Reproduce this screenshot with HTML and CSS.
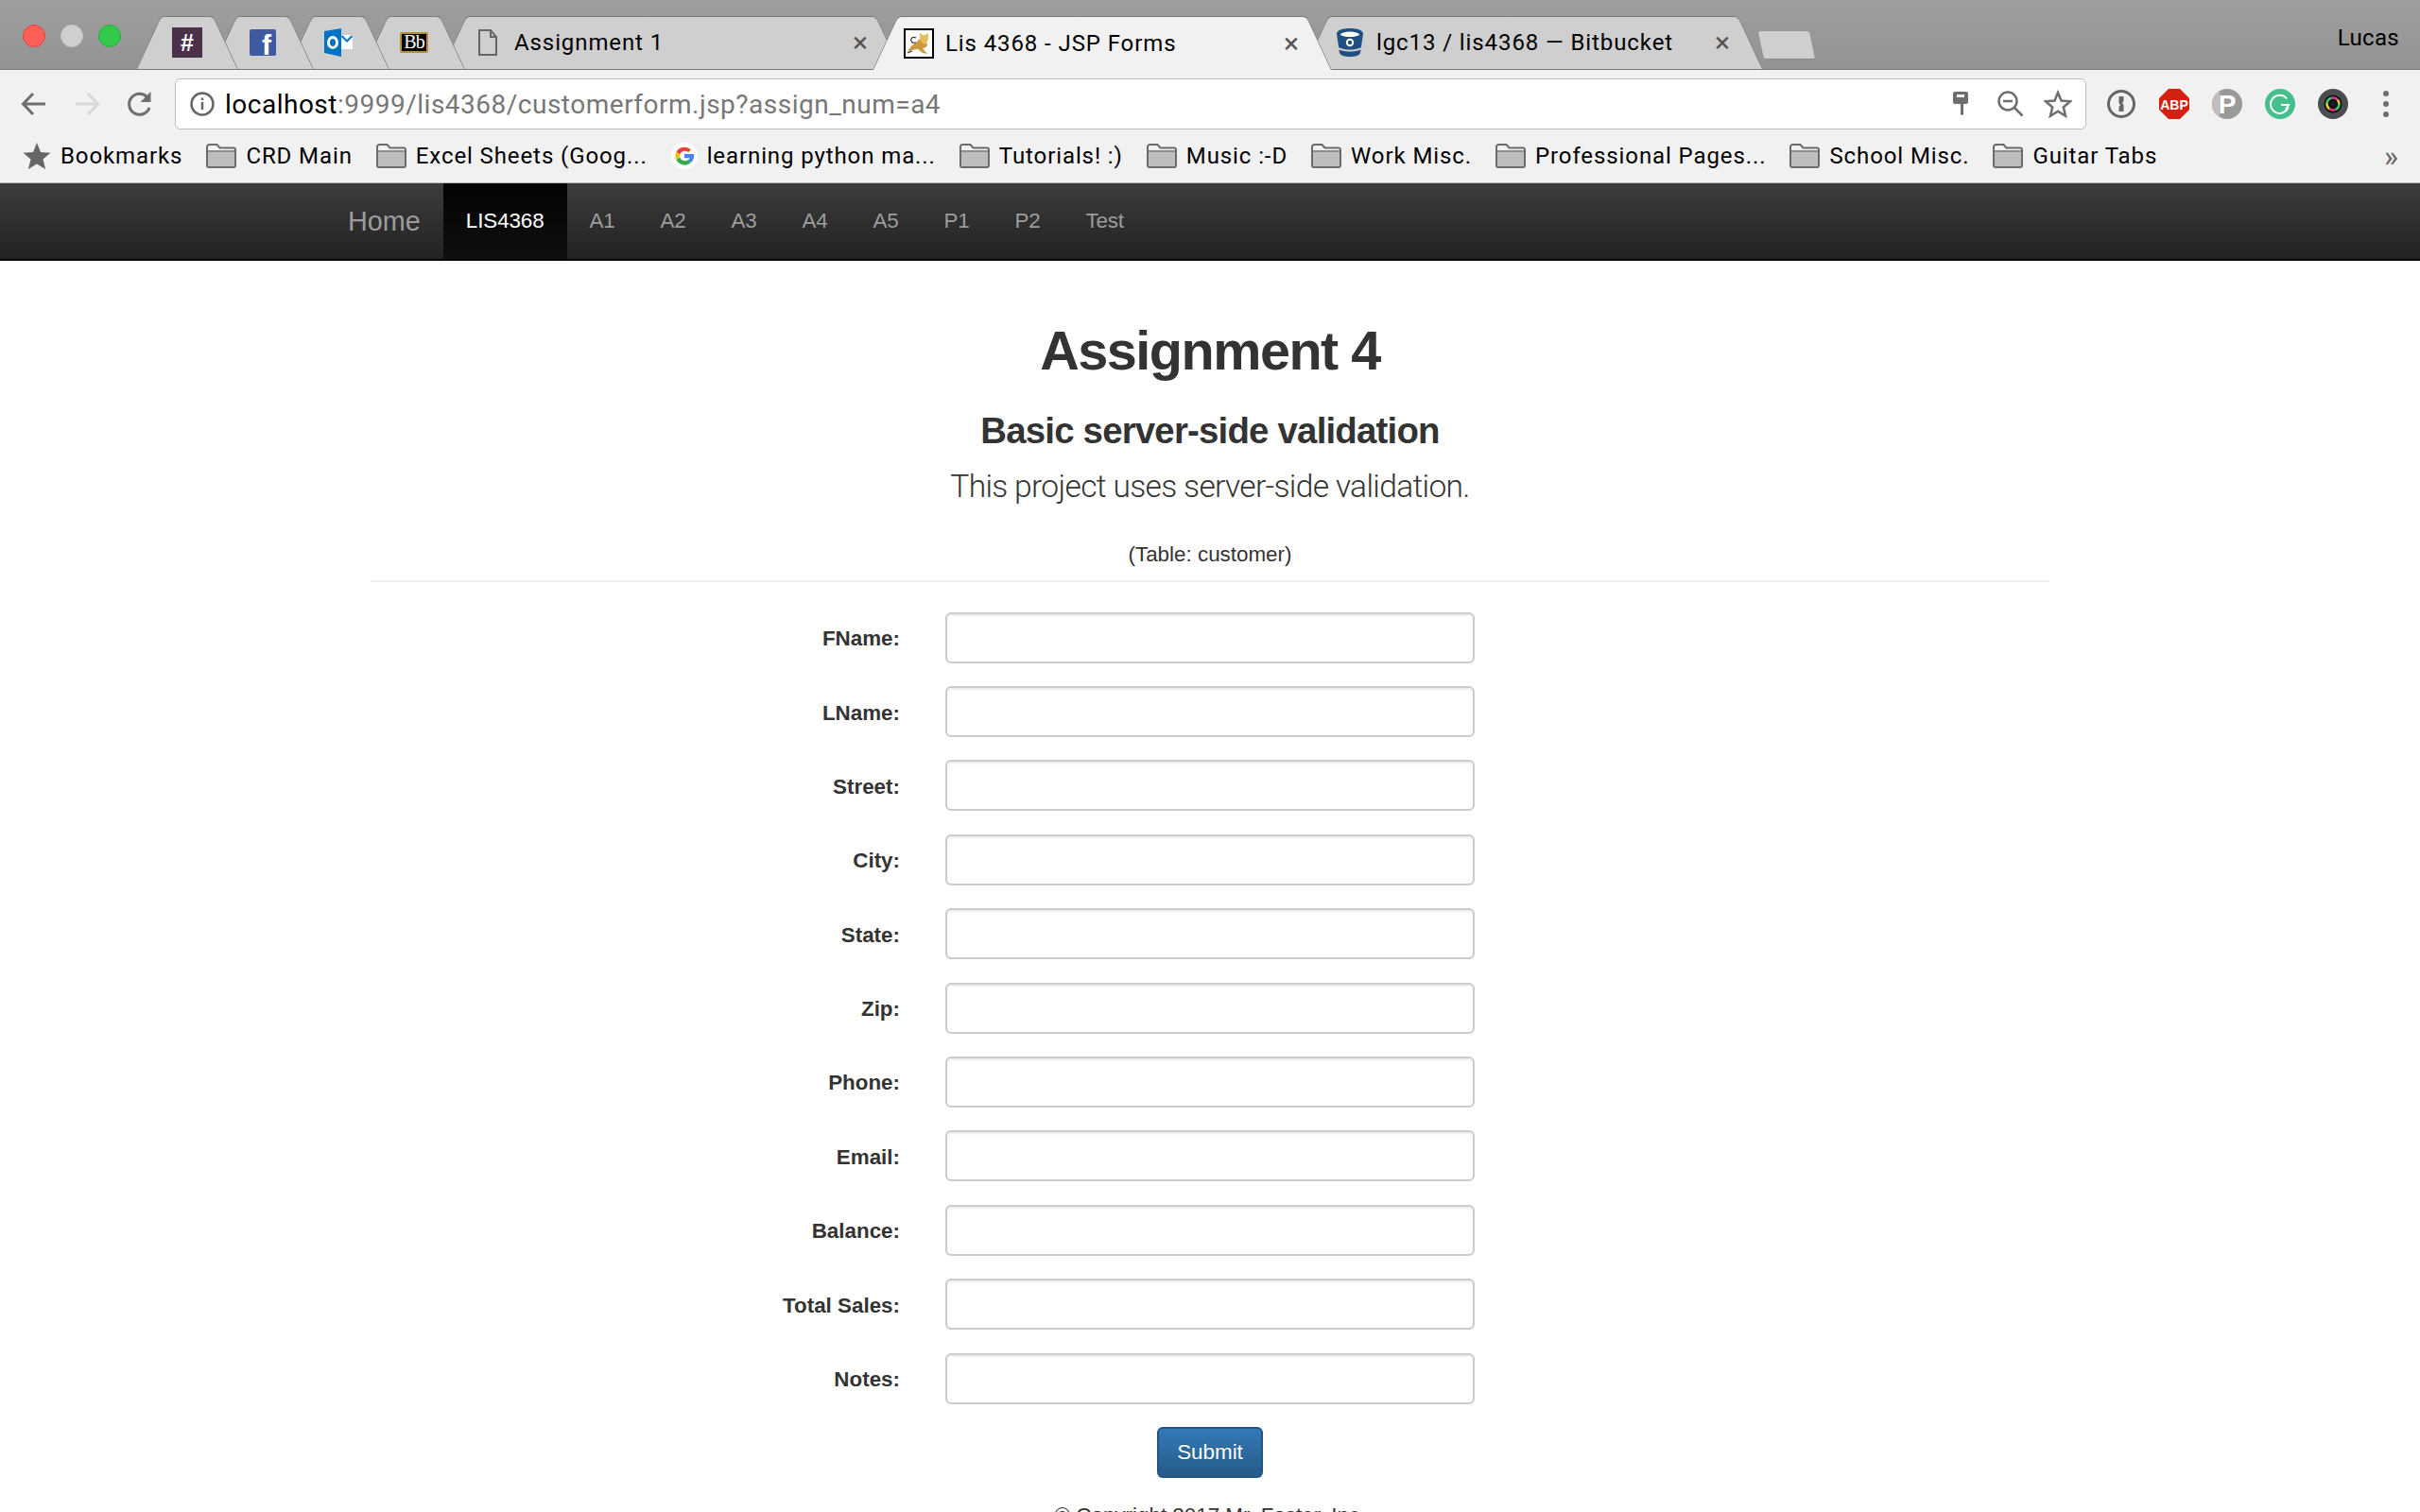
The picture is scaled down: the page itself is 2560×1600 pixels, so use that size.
FILE: index.html
```html
<!DOCTYPE html>
<html lang="en">
<head>
    <meta charset="UTF-8">
    <meta name="viewport" content="width=device-width, initial-scale=1.0">
    <title>Lis 4368 - JSP Forms</title>
    <link rel="stylesheet" href="styles.css">
</head>
<body>
    <svg class="defs" width="0" height="0">
        <symbol id="folder" viewBox="0 0 32 26">
            <path d="M1 3.500A2.500 2.500 0 0 1 3.500 1h8l3 3.500H29A2 2 0 0 1 31 6.500V23a2 2 0 0 1-2 2H3a2 2 0 0 1-2-2z" fill="#f1f1f1" stroke="#6b6b6b" stroke-width="2"/>
            <rect x="2" y="9" width="28" height="15" fill="#bebebe"/>
            <path d="M2 8h28" stroke="#6b6b6b" stroke-width="1.500"/>
        </symbol>
    </svg>

    <!-- tab strip -->
    <div class="tabstrip">
        <div class="lights"><i class="red"></i><i class="grey"></i><i class="green"></i></div>
        <div class="tab small">
            <span class="fav slack">#</span>
        </div>
        <div class="tab small">
            <span class="fav fb">f</span>
        </div>
        <div class="tab small">
            <svg class="fav" viewBox="0 0 32 32"><path d="M1 4 19 1v30L1 27z" fill="#0072c6"/><rect x="19" y="8" width="12" height="15" fill="#fff"/><path d="M19.500 9 25 14.500 30.500 9" fill="none" stroke="#0072c6" stroke-width="2"/><ellipse cx="10" cy="16" rx="4.500" ry="5.500" fill="none" stroke="#fff" stroke-width="3"/></svg>
        </div>
        <div class="tab small">
            <span class="fav bb">Bb</span>
        </div>
        <div class="tab big first">
            <svg class="fav" viewBox="0 0 32 32"><path d="M7 3h12l6 7v19H7z M19 3v7h6" fill="none" stroke="#666" stroke-width="2"/></svg>
            <span class="title">Assignment 1</span>
            <span class="close">×</span>
        </div>
        <div class="tab big active">
            <svg class="fav" viewBox="0 0 32 32"><rect x="1" y="1" width="30" height="30" fill="#fff" stroke="#000" stroke-width="2"/><path d="M4 25c3-6 6-8 9-10l3-3 7-1 2 7c-1 2-3 3-5 3l5 6-5-1-5-4-6 1z" fill="#c99a3f"/><path d="M17 5l3 2h3l3-2v7l-3 5-3-1-3-4z" fill="#e6bd5c"/><path d="M13 15c-4 1-6-1-5-4 1-2 3-2 5-1" fill="none" stroke="#333" stroke-width="1.200"/><path d="M4 26l5-2" stroke="#333" stroke-width="1.200"/></svg>
            <span class="title">Lis 4368 - JSP Forms</span>
            <span class="close">×</span>
        </div>
        <div class="tab big">
            <svg class="fav" viewBox="0 0 32 32"><path d="M2 7C2 3 8 1 16 1s14 2 14 6l-3 20c-1 3-6 4-11 4S6 30 5 27z" fill="#205081"/><path d="M5.500 7.500c2-2 6-3 10.500-3s8.500 1 10.500 3C24 9.500 20 10 16 10S8 9.500 5.500 7.500z" fill="#fff"/><path d="M3.800 21c4 2 8 2.500 12.200 2.500s8-.5 12.200-2.500l-.3 2.500c-4 1.500-8 2-11.900 2s-8-.5-11.900-2z" fill="#cfcfcf"/><circle cx="16" cy="16" r="3.200" fill="none" stroke="#fff" stroke-width="2"/></svg>
            <span class="title">lgc13 / lis4368 — Bitbucket</span>
            <span class="close">×</span>
        </div>
        <div class="newtab"></div>
        <span class="user">Lucas</span>
    </div>

    <!-- address bar -->
    <div class="toolbar">
        <div class="btn">
            <svg width="28" height="26" viewBox="0 0 28 26"><path d="M26 13H3M13 2 2.500 13 13 24" fill="none" stroke="#6e6e6e" stroke-width="3"/></svg>
        </div>
        <div class="btn">
            <svg width="28" height="26" viewBox="0 0 28 26"><path d="M2 13h23M15 2l10.500 11L15 24" fill="none" stroke="#d8d8d8" stroke-width="3"/></svg>
        </div>
        <div class="btn">
            <svg width="30" height="30" viewBox="0 0 30 30"><path d="M25 19a11 11 0 1 1-2.500-11.500" fill="none" stroke="#6e6e6e" stroke-width="3"/><path d="M26.500 2v11h-11z" fill="#6e6e6e"/></svg>
        </div>
        <div class="omnibox">
            <svg class="info" width="28" height="28" viewBox="0 0 28 28"><circle cx="14" cy="14" r="11.500" fill="none" stroke="#666" stroke-width="2.500"/><path d="M14 12v8M14 7.500v2.500" stroke="#666" stroke-width="2.500"/></svg>
            <span class="url"><b>localhost</b>:9999/lis4368/customerform.jsp?assign_num=a4</span>
            <svg class="omni-icon key" width="16" height="26" viewBox="0 0 16 26"><path d="M2 0h12a2 2 0 0 1 2 2v9a2 2 0 0 1-2 2h-3v11a2 2 0 0 1-3 0V13H2a2 2 0 0 1-2-2V2a2 2 0 0 1 2-2z" fill="#6e6e6e"/><rect x="4" y="3" width="8" height="3" fill="#f1f1f1"/></svg>
            <svg class="omni-icon" width="28" height="28" viewBox="0 0 28 28"><circle cx="11" cy="11" r="9.500" fill="none" stroke="#6e6e6e" stroke-width="2.500"/><path d="M6 11h10M18 18l8.500 8.500" stroke="#6e6e6e" stroke-width="2.500"/></svg>
            <svg class="omni-icon" width="30" height="30" viewBox="0 0 30 30"><path d="M15 3l3.500 8.500 9.500.8-7.200 6.200 2.200 9.200L15 22.800l-8 4.900 2.200-9.200L2 12.300l9.500-.8z" fill="none" stroke="#6e6e6e" stroke-width="2.500"/></svg>
        </div>
        <div class="exts">
            <div class="ext">
                <svg width="32" height="32" viewBox="0 0 32 32"><circle cx="16" cy="16" r="13.500" fill="#f1f1f1" stroke="#666" stroke-width="3"/><path d="M13.500 8h5v5l-1.500 2 1.500 2v7h-5v-5l1.500-2-1.500-2z" fill="#666"/></svg>
            </div>
            <div class="ext">
                <svg width="32" height="32" viewBox="0 0 32 32"><path d="M10 0h12l10 10v12L22 32H10L0 22V10z" fill="#d32011"/><text x="16" y="21.500" class="abp">ABP</text></svg>
            </div>
            <div class="ext">
                <svg width="32" height="32" viewBox="0 0 32 32"><circle cx="16" cy="16" r="16" fill="#9a9a9a"/><path d="M0 16a16 16 0 0 1 8-14v28a16 16 0 0 1-8-14z" fill="#c4bcbc"/><text x="16" y="26" class="pin">P</text></svg>
            </div>
            <div class="ext">
                <svg width="32" height="32" viewBox="0 0 32 32"><circle cx="16" cy="16" r="16" fill="#45c08c"/><path d="M23 10.500a9.500 9.500 0 1 0 1.500 9M17 17h8l-3 5" fill="none" stroke="#fff" stroke-width="2"/></svg>
            </div>
            <div class="ext">
                <svg width="32" height="32" viewBox="0 0 32 32"><circle cx="16" cy="16" r="16" fill="#4a4d52"/><circle cx="16" cy="16" r="9.500" fill="#111"/><circle cx="16" cy="16" r="6.500" fill="none" stroke="#38d06a" stroke-width="2.500" stroke-dasharray="7 14"/><circle cx="16" cy="16" r="6.500" fill="none" stroke="#e0388a" stroke-width="2.500" stroke-dasharray="7 14" stroke-dashoffset="14"/><circle cx="16" cy="16" r="6.500" fill="none" stroke="#e8d030" stroke-width="2.500" stroke-dasharray="7 14" stroke-dashoffset="7"/><circle cx="16" cy="16" r="2.500" fill="#123"/></svg>
            </div>
            <div class="ext">
                <svg width="6" height="28" viewBox="0 0 6 28"><circle cx="3" cy="3" r="3" fill="#6e6e6e"/><circle cx="3" cy="14" r="3" fill="#6e6e6e"/><circle cx="3" cy="25" r="3" fill="#6e6e6e"/></svg>
            </div>
        </div>
    </div>

    <!-- bookmarks -->
    <div class="bookmarks">
        <div class="mark">
            <svg width="30" height="30" viewBox="0 0 30 30"><path d="M15 1l4 10 10.500.8-8 6.800 2.600 10.400L15 23.500 5.900 29l2.600-10.400-8-6.800L11 11z" fill="#666"/></svg>
            <span>Bookmarks</span>
        </div>
        <div class="mark"><svg class="folder"><use href="#folder"/></svg><span>CRD Main</span></div>
        <div class="mark"><svg class="folder"><use href="#folder"/></svg><span>Excel Sheets (Goog...</span></div>
        <div class="mark">
            <svg width="28" height="28" viewBox="0 0 28 28"><circle cx="14" cy="14" r="14" fill="#fff"/><path d="M21 7.500A10 10 0 0 0 5.500 9.500l3.500 3A6 6 0 0 1 18.200 10z" fill="#ea4335"/><path d="M5.500 9.500a10 10 0 0 0 0 9l3.500-3a6 6 0 0 1 0-3z" fill="#fbbc05"/><path d="M5.500 18.500a10 10 0 0 0 15.500 2.500l-3.300-2.800A6 6 0 0 1 9 15.500z" fill="#34a853"/><path d="M24 12H14v4.200h5.800a5 5 0 0 1-2.100 2L21 21c2.500-2.200 3.600-5.500 3-9z" fill="#4285f4"/></svg>
            <span>learning python ma...</span>
        </div>
        <div class="mark"><svg class="folder"><use href="#folder"/></svg><span>Tutorials! :)</span></div>
        <div class="mark"><svg class="folder"><use href="#folder"/></svg><span>Music :-D</span></div>
        <div class="mark"><svg class="folder"><use href="#folder"/></svg><span>Work Misc.</span></div>
        <div class="mark"><svg class="folder"><use href="#folder"/></svg><span>Professional Pages...</span></div>
        <div class="mark"><svg class="folder"><use href="#folder"/></svg><span>School Misc.</span></div>
        <div class="mark"><svg class="folder"><use href="#folder"/></svg><span>Guitar Tabs</span></div>
        <span class="more">»</span>
    </div>

    <!-- site nav -->
    <nav class="navbar">
        <a class="brand" href="#">Home</a>
        <a class="on" href="#">LIS4368</a>
        <a href="#">A1</a>
        <a href="#">A2</a>
        <a href="#">A3</a>
        <a href="#">A4</a>
        <a href="#">A5</a>
        <a href="#">P1</a>
        <a href="#">P2</a>
        <a href="#">Test</a>
    </nav>

    <main class="page">
        <h1>Assignment 4</h1>
        <h3>Basic server-side validation</h3>
        <p class="lead">This project uses server-side validation.</p>
        <p class="note">(Table: customer)</p>
        <hr>
        <form class="form">
            <label for="fname">FName:</label><input id="fname" type="text"><span></span>
            <label for="lname">LName:</label><input id="lname" type="text"><span></span>
            <label for="street">Street:</label><input id="street" type="text"><span></span>
            <label for="city">City:</label><input id="city" type="text"><span></span>
            <label for="state">State:</label><input id="state" type="text"><span></span>
            <label for="zip">Zip:</label><input id="zip" type="text"><span></span>
            <label for="phone">Phone:</label><input id="phone" type="text"><span></span>
            <label for="email">Email:</label><input id="email" type="text"><span></span>
            <label for="balance">Balance:</label><input id="balance" type="text"><span></span>
            <label for="sales">Total Sales:</label><input id="sales" type="text"><span></span>
            <label for="notes">Notes:</label><input id="notes" type="text"><span></span>
            <button class="submit" type="button">Submit</button>
        </form>
        <p class="copy">© Copyright 2017 Mr. Foster, Inc.</p>
    </main>
</body>
</html>
```

FILE: styles.css
```css
* {margin:0; padding:0; box-sizing:border-box;}
html, body {height:1600px; overflow:hidden;}
body {background-color:#fff; color:#333; font-family:"Liberation Sans", Arial, sans-serif; font-size:22.4px;}
.defs {position:absolute;}

/* tab strip */
.tabstrip {
    display:flex; align-items:flex-start;
    height:74px; padding:17px 0 0 0;
    background:linear-gradient(#9e9e9e, #939393);
    border-bottom:1px solid #787878;
    font-family:Roboto, sans-serif; color:#000;
}
.lights {display:flex; gap:16px; width:144px; padding:9px 0 0 24px;}
.lights i {display:block; width:24px; height:24px; border-radius:50%; border:1px solid;}
.lights .red {background-color:#fc5f57; border-color:#df4744;}
.lights .grey {background-color:#cfcfcf; border-color:#c4c4c4;}
.lights .green {background-color:#34c84a; border-color:#2aac3c;}

.tab {
    position:relative;
    display:flex; align-items:center;
    height:56px; flex:none;
    font-size:24px; letter-spacing:0.9px;
}
.tab::before, .tab::after {
    content:''; position:absolute; top:0; bottom:0; width:50%; z-index:-1;
    background-color:#cfcfcf; border-top:1px solid #787878;
}
.tab::before {left:0; transform:skewX(-25deg); transform-origin:bottom left; border-left:1px solid #787878; border-top-left-radius:5px;}
.tab::after {right:0; transform:skewX(25deg); transform-origin:bottom right; border-right:1px solid #787878; border-top-right-radius:5px;}
.tab.small {width:108px; margin-right:-28px; justify-content:center;}
.tab.big {width:485px; margin-right:-29px; padding:0 34px 0 33px;}
.tab.first {margin-left:3px;}
.tabstrip .tab:nth-child(2) {z-index:8;}
.tabstrip .tab:nth-child(3) {z-index:7;}
.tabstrip .tab:nth-child(4) {z-index:6;}
.tabstrip .tab:nth-child(5) {z-index:5;}
.tabstrip .tab:nth-child(6) {z-index:4;}
.tabstrip .tab:nth-child(8) {z-index:3;}
.tab.active {z-index:9; height:57px;}
.tab.active::before, .tab.active::after {background-color:#f1f1f1;}

.fav {display:block; width:32px; height:32px; flex:none;}
.slack {background-color:#4a3149; color:#fff; font:bold 25px/32px "Liberation Sans", sans-serif; text-align:center; letter-spacing:0;}
.fb {width:28px; height:28px; padding:2px 5px 0 0; background-color:#3f5a9f; border-radius:2px; color:#fff; font:bold 30px/30px "Liberation Sans", sans-serif; text-align:right; letter-spacing:0;}
.bb {width:30px; height:22px; background-color:#000; border:2px solid #b8902f; border-radius:2px; color:#fff; font:20px/17px "Liberation Serif", serif; text-align:center; letter-spacing:-1px;}
.title {margin-left:12px;}
.close {margin-left:auto; color:#555; font-size:30px; line-height:30px; letter-spacing:0;}
.newtab {
    flex:none; width:54px; height:30px; margin:16px 0 0 28px;
    background-color:#cfcfcf; border-radius:3px; border-bottom:1px solid #8a8a8a;
    transform:skewX(12deg);
}
.user {margin-left:auto; padding:9px 22px 0 0; font-size:24px; line-height:28px; letter-spacing:0.3px;}

/* address bar */
.toolbar {display:flex; height:63px; padding:9px 0 0 8px; background-color:#f1f1f1;}
.btn {display:flex; align-items:center; justify-content:center; width:56px; height:54px;}
.omnibox {
    display:flex; align-items:center;
    width:2022px; height:54px; margin-left:9px; padding:0 14px 0 14px;
    background-color:#fff; border:1px solid #bdbdbd; border-radius:6px;
}
.url {flex:1; margin-left:10px; font-family:Roboto, sans-serif; font-size:28px; letter-spacing:0.5px; color:#777;}
.url b {font-weight:400; color:#000;}
.omni-icon {margin-left:21px;}
.omni-icon.key {margin-right:10px;}
.exts {display:flex; margin-left:9px;}
.ext {display:flex; align-items:center; justify-content:center; width:56px; height:54px;}
.abp {font:bold 14px "Liberation Sans", sans-serif; fill:#fff; text-anchor:middle;}
.pin {font:bold 28px "Liberation Sans", sans-serif; fill:#fff; text-anchor:middle;}

/* bookmarks */
.bookmarks {
    display:flex; align-items:center; gap:25px;
    height:57px; padding:0 0 0 24px;
    background-color:#f1f1f1; border-bottom:1px solid #b9b9b9;
    font-family:Roboto, sans-serif; font-size:24px; letter-spacing:0.9px; color:#000;
}
.mark {display:flex; align-items:center; gap:10px; white-space:nowrap;}
.folder {width:32px; height:26px;}
.more {margin-left:auto; padding-right:22px; color:#666; font-size:32px; line-height:32px;}

/* site nav */
.navbar {
    display:flex; height:82px; padding-left:344px;
    background:linear-gradient(#3c3c3c, #222);
    border-bottom:2px solid #080808;
}
.navbar a {display:block; padding:0 24px; color:#9d9d9d; font-size:22.4px; line-height:80px; letter-spacing:-0.2px; text-decoration:none;}
.navbar .brand {font-size:28.8px; letter-spacing:0;}
.navbar .on {background:linear-gradient(#030303, #0f0f0f); color:#fff; letter-spacing:-0.1px;}

/* page */
.page {width:1776px; margin:0 auto; padding-top:64px; text-align:center;}
h1 {font-size:57.6px; font-weight:bold; line-height:1.1; letter-spacing:-1.5px;}
h3 {margin-top:32px; font-size:38.4px; font-weight:bold; line-height:1.1; letter-spacing:-0.8px;}
.lead {margin-top:13px; font-family:Roboto, sans-serif; font-size:33.6px; font-weight:300; line-height:1.4; letter-spacing:-0.68px;}
.note {margin-top:33px; line-height:32px;}
hr {margin:11px 0 32px; border:0; border-top:2px solid #eee;}

.form {display:grid; grid-template-columns:560px 560px 560px; column-gap:48px; row-gap:24.4px; align-items:center;}
.form label {padding-top:3px; font-weight:bold; text-align:right;}
.form input {
    display:block; width:560px; height:54px;
    border:2px solid #ccc; border-radius:6px;
    box-shadow:inset 0 2px 2px rgba(0,0,0,0.075);
}
.submit {
    grid-column:1 / -1; justify-self:center;
    width:112px; height:54px;
    background:linear-gradient(#337ab7, #265a88);
    border:2px solid #245580; border-radius:6px;
    color:#fff; font:22.4px "Liberation Sans", sans-serif;
    text-shadow:0 -1px 0 rgba(0,0,0,0.2);
}
.copy {margin-top:24px; line-height:32px;}
```
